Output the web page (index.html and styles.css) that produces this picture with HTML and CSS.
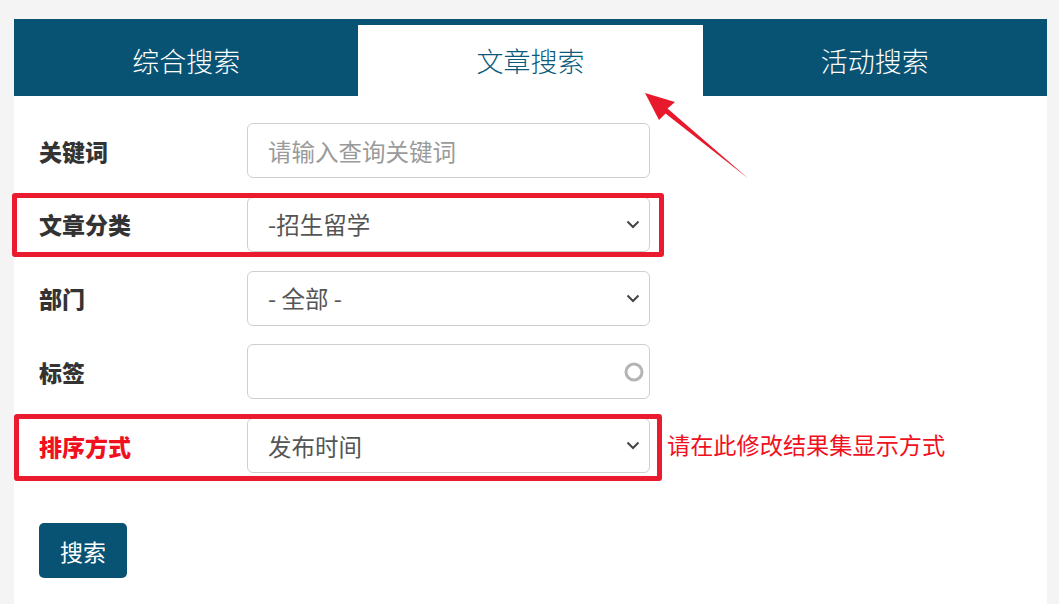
FILE: index.html
```html
<!DOCTYPE html>
<html lang="zh-CN">
<head>
<meta charset="utf-8">
<title>文章搜索</title>
<link rel="stylesheet" href="styles.css">
</head>
<body>
<div class="page">
  <div class="panel">
    <div class="tabs">
      <div class="tab">综合搜索</div>
      <div class="tab active">文章搜索</div>
      <div class="tab">活动搜索</div>
    </div>
    <form class="form">
      <div class="row">
        <label class="label">关键词</label>
        <div class="field"><span class="placeholder">请输入查询关键词</span></div>
      </div>
      <div class="row">
        <span class="mark mark-1"></span>
        <label class="label">文章分类</label>
        <div class="field"><span class="value">-招生留学</span>
          <svg class="chev" width="14" height="9" viewBox="0 0 14 9"><path d="M1.5 1.5 L7 7 L12.5 1.5" fill="none" stroke="#444" stroke-width="2"/></svg>
        </div>
      </div>
      <div class="row">
        <label class="label">部门</label>
        <div class="field"><span class="value">- 全部 -</span>
          <svg class="chev" width="14" height="9" viewBox="0 0 14 9"><path d="M1.5 1.5 L7 7 L12.5 1.5" fill="none" stroke="#444" stroke-width="2"/></svg>
        </div>
      </div>
      <div class="row">
        <label class="label">标签</label>
        <div class="field">
          <svg class="ring" width="22" height="22" viewBox="0 0 22 22"><circle cx="11" cy="11" r="8" fill="none" stroke="#b4b4b4" stroke-width="3"/></svg>
        </div>
      </div>
      <div class="row">
        <span class="mark mark-2"></span>
        <label class="label red">排序方式</label>
        <div class="field"><span class="value">发布时间</span>
          <svg class="chev" width="14" height="9" viewBox="0 0 14 9"><path d="M1.5 1.5 L7 7 L12.5 1.5" fill="none" stroke="#444" stroke-width="2"/></svg>
        </div>
        <span class="note">请在此修改结果集显示方式</span>
      </div>
      <div class="actions">
        <button type="button" class="btn">搜索</button>
      </div>
    </form>
  </div>
  <svg class="arrow" width="1059" height="604" viewBox="0 0 1059 604">
    <polygon fill="#e8192c" points="645,93 659,120 665.5,113.5 748.3,178.4 667.5,108.5 675,102"/>
  </svg>
</div>
</body>
</html>
```

FILE: styles.css
```css
html, body {
  margin: 0;
  padding: 0;
}
body {
  background: #f4f4f4;
  font-family: "Noto Sans CJK SC", "Noto Sans", sans-serif;
  overflow: hidden;
}
.page {
  position: relative;
  width: 1059px;
  height: 604px;
  padding: 19px 12px 0 14px;
  box-sizing: border-box;
}
.panel {
  background: #fff;
  height: 585px;
}
.tabs {
  display: flex;
  height: 77px;
  background: #085373;
}
.tab {
  flex: 1;
  display: flex;
  align-items: center;
  justify-content: center;
  padding-top: 6px;
  box-sizing: border-box;
  color: #fff;
  font-size: 27px;
  font-weight: 300;
}
.tab.active {
  background: #fff;
  color: #0b5a7c;
  margin-top: 6px;
  padding-top: 0;
}
.form {
  padding: 27px 0 0 25px;
}
.row {
  position: relative;
  display: flex;
  align-items: center;
  height: 55px;
  margin-bottom: 18.75px;
}
.label {
  width: 208px;
  flex: none;
  font-size: 23px;
  font-weight: 800;
  color: #333;
}
.label.red {
  color: #f0101e;
}
.field {
  width: 403px;
  height: 55px;
  flex: none;
  box-sizing: border-box;
  border: 1px solid #cfcfcf;
  border-radius: 6px;
  display: flex;
  align-items: center;
  padding: 0 9px 0 20px;
  font-size: 23.5px;
  color: #555;
}
.placeholder {
  color: #9a9a9a;
}
.value {
  flex: 1;
}
.chev {
  margin-left: auto;
  display: block;
}
.ring {
  margin-left: auto;
  margin-right: -5px;
  display: block;
}
.note {
  margin-left: 17px;
  margin-top: -4px;
  font-size: 23.2px;
  color: #f0101e;
  white-space: nowrap;
}
.mark {
  position: absolute;
  box-sizing: border-box;
  border: 5px solid #ea1b2e;
  border-radius: 3px;
  pointer-events: none;
}
.mark-1 {
  left: -27px;
  top: -4px;
  width: 652px;
  height: 64px;
}
.mark-2 {
  left: -25px;
  top: -4px;
  width: 648px;
  height: 67px;
}
.actions {
  padding-top: 31.5px;
}
.btn {
  width: 88px;
  height: 55px;
  border: none;
  border-radius: 5px;
  background: #085373;
  color: #fff;
  font-family: inherit;
  font-size: 23px;
  padding: 0;
}
.arrow {
  position: absolute;
  left: 0;
  top: 0;
  pointer-events: none;
}
```
